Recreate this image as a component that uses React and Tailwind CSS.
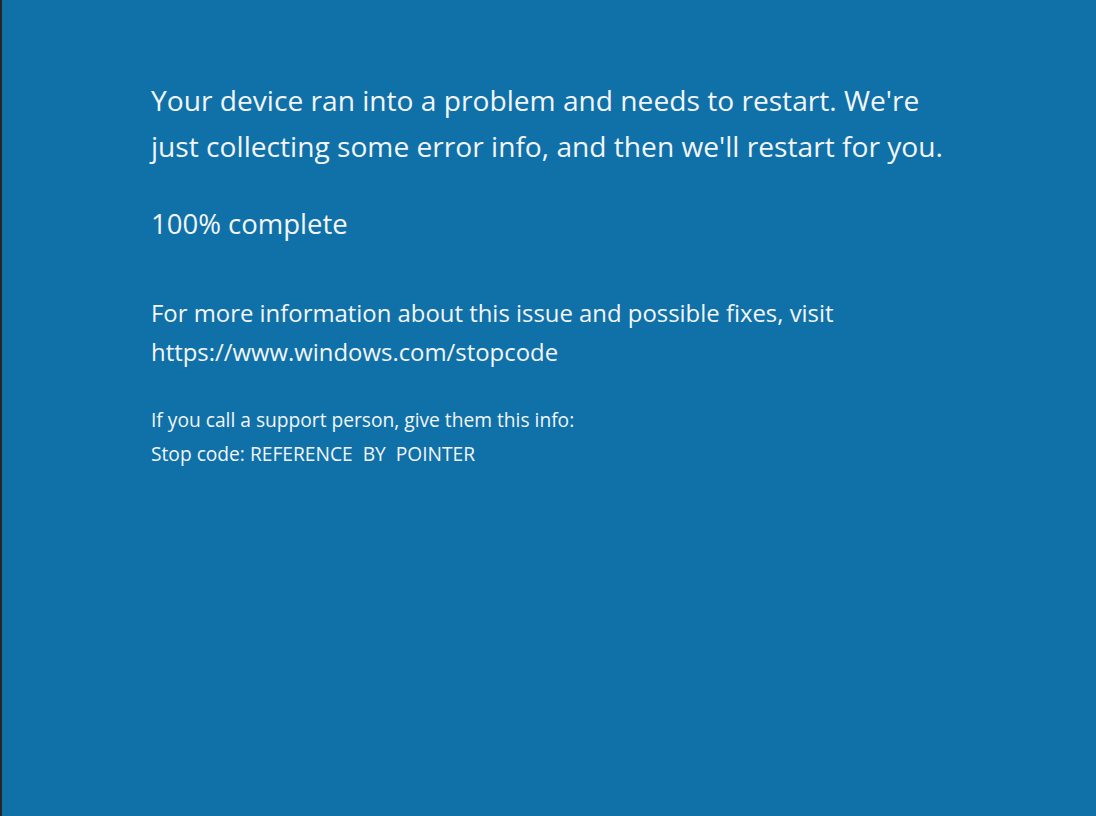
import React from 'react';

export default function App() {
  return (
    <div className="w-[1096px] h-[816px] bg-[#1070a8] border-l-2 border-[#262626] text-[#f2f6fa] overflow-hidden" style={{ fontFamily: '"Open Sans", "Noto Sans", sans-serif' }}>
      <div className="pl-[149px] pt-[77px] flex flex-col">
        <p className="text-[28.15px] leading-[46px]">
          Your device ran into a problem and needs to restart. We're<br />
          just collecting some error info, and then we'll restart for you.
        </p>
        <p className="text-[27.5px] leading-[40px] mt-[35px]">100% complete</p>
        <p className="text-[23.9px] leading-[39px] mt-[49px]">
          For more information about this issue and possible fixes, visit<br />
          https://www.windows.com/stopcode
        </p>
        <div className="text-[19.2px] leading-[34px] mt-[32px]">
          <p>If you call a support person, give them this info:</p>
          <p className="whitespace-pre">Stop code: REFERENCE  BY  POINTER</p>
        </div>
      </div>
    </div>
  );
}
